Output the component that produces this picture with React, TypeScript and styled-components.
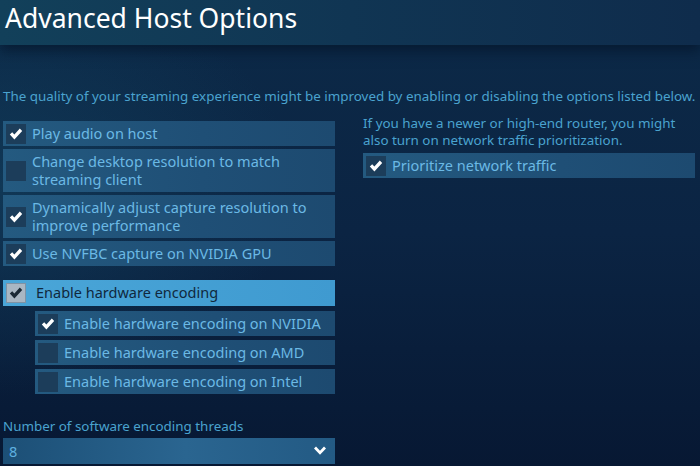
import React from "react";
import styled, { createGlobalStyle } from "styled-components";

const Global = createGlobalStyle`
  html, body { margin: 0; padding: 0; background: #0a1d38; }
  * { box-sizing: border-box; }
`;

const Page = styled.div`
  width: 700px;
  height: 466px;
  overflow: hidden;
  position: relative;
  font-family: "Noto Sans", "Open Sans", sans-serif;
  background:
    radial-gradient(ellipse 420px 300px at 0% 40%, rgba(20, 70, 100, 0.55), transparent 70%),
    linear-gradient(180deg, #0c2a48 0%, #0b2443 50%, #071833 100%);
`;

const Header = styled.div`
  height: 45px;
  padding: 0 0 0 5px;
  background: linear-gradient(90deg, #12405a 0%, #103553 50%, #0f2c4c 100%);
  box-shadow: 0 6px 12px rgba(4, 16, 36, 0.6);
  position: relative;
`;

const Title = styled.h1`
  margin: 0;
  padding-top: 1px;
  font-weight: 400;
  font-size: 26.5px;
  line-height: 34px;
  color: #ffffff;
`;

const Description = styled.p`
  margin: 42px 0 0 3px;
  font-size: 13.4px;
  line-height: 18px;
  color: #4aa3cf;
  white-space: nowrap;
`;

const Columns = styled.div`
  display: grid;
  grid-template-columns: 332px 332px;
  column-gap: 28px;
  padding: 0 0 0 3px;
  margin-top: 16px;
`;

const Column = styled.div`
  display: flex;
  flex-direction: column;
`;

const Group = styled.div<{ $gap: number }>`
  display: flex;
  flex-direction: column;
  gap: ${(p) => p.$gap}px;
`;

const Row = styled.div<{ $indent?: boolean; $active?: boolean; $tall?: boolean }>`
  display: flex;
  align-items: center;
  gap: 6px;
  margin-left: ${(p) => (p.$indent ? "32px" : "0")};
  min-height: ${(p) => (p.$active ? "26px" : "25px")};
  padding: ${(p) => (p.$tall ? "4px 6px 4px 3px" : "0 6px 0 3px")};
  background: ${(p) =>
    p.$active
      ? "linear-gradient(90deg, #4aa6d8 0%, #3f9ad0 100%)"
      : "linear-gradient(90deg, #245a80 0%, #1f4f76 60%, #1d4a70 100%)"};
  color: ${(p) => (p.$active ? "#10283d" : "#6bb9e5")};
  font-size: 14.5px;
  line-height: 17.5px;
`;

const Box = styled.span<{ $active?: boolean }>`
  flex: 0 0 auto;
  width: 20px;
  height: 20px;
  display: flex;
  align-items: center;
  justify-content: center;
  background: ${(p) => (p.$active ? "#a9b7c3" : "#1c3d5a")};
  border: ${(p) => (p.$active ? "1px solid #7f93a5" : "none")};
`;

const Label = styled.span<{ $active?: boolean }>`
  padding-left: ${(p) => (p.$active ? "4px" : "0")};
`;

const Note = styled.p`
  margin: -6px 0 4px 0;
  font-size: 13.4px;
  line-height: 17px;
  color: #4aa3cf;
`;

const Spacer = styled.div<{ $h: number }>`
  height: ${(p) => p.$h}px;
`;

const FieldLabel = styled.div`
  font-size: 13.4px;
  line-height: 17px;
  color: #4aa3cf;
  margin-bottom: 3px;
`;

const Select = styled.div`
  height: 26px;
  display: flex;
  align-items: center;
  justify-content: space-between;
  padding: 0 8px 0 6px;
  background: linear-gradient(90deg, #1c4f76 0%, #2a6590 55%, #235a84 100%);
  color: #5fb0e0;
  font-size: 14.5px;
`;

const Check = ({ dark }: { dark?: boolean }) => (
  <svg width="14" height="12" viewBox="0 0 14 12">
    <path
      d="M0.8 6.6 L3.2 4.2 L5.4 6.6 L10.8 0.6 L13.2 3 L5.4 11.4 Z"
      fill={dark ? "#1b2a36" : "#ffffff"}
    />
  </svg>
);

const Chevron = () => (
  <svg width="14" height="10" viewBox="0 0 14 10">
    <path d="M1 2.5 L3 0.6 L7 4.8 L11 0.6 L13 2.5 L7 8.8 Z" fill="#ffffff" />
  </svg>
);

type Opt = { label: React.ReactNode; checked: boolean; tall?: boolean };

const Option = ({
  label,
  checked,
  tall,
  indent,
  active,
}: Opt & { indent?: boolean; active?: boolean }) => (
  <Row $indent={indent} $active={active} $tall={tall}>
    <Box $active={active}>{checked && <Check dark={active} />}</Box>
    <Label $active={active}>{label}</Label>
  </Row>
);

const mainOpts: Opt[] = [
  { label: "Play audio on host", checked: true },
  {
    label: (
      <>
        Change desktop resolution to match
        <br />
        streaming client
      </>
    ),
    checked: false,
    tall: true,
  },
  {
    label: (
      <>
        Dynamically adjust capture resolution to
        <br />
        improve performance
      </>
    ),
    checked: true,
    tall: true,
  },
  { label: "Use NVFBC capture on NVIDIA GPU", checked: true },
];

const hwOpts: Opt[] = [
  { label: "Enable hardware encoding on NVIDIA", checked: true },
  { label: "Enable hardware encoding on AMD", checked: false },
  { label: "Enable hardware encoding on Intel", checked: false },
];

export default function App() {
  return (
    <Page>
      <Global />
      <Header>
        <Title>Advanced Host Options</Title>
      </Header>
      <Description>
        The quality of your streaming experience might be improved by enabling or disabling the options listed below.
      </Description>
      <Columns>
        <Column>
          <Group $gap={3}>
            {mainOpts.map((o, i) => (
              <Option key={i} {...o} />
            ))}
          </Group>
          <Spacer $h={14} />
          <Option label="Enable hardware encoding" checked active />
          <Spacer $h={5} />
          <Group $gap={4}>
            {hwOpts.map((o, i) => (
              <Option key={i} {...o} indent />
            ))}
          </Group>
          <Spacer $h={24} />
          <FieldLabel>Number of software encoding threads</FieldLabel>
          <Select>
            <span>8</span>
            <Chevron />
          </Select>
        </Column>
        <Column>
          <Note>
            If you have a newer or high-end router, you might
            <br />
            also turn on network traffic prioritization.
          </Note>
          <Option label="Prioritize network traffic" checked />
        </Column>
      </Columns>
    </Page>
  );
}
